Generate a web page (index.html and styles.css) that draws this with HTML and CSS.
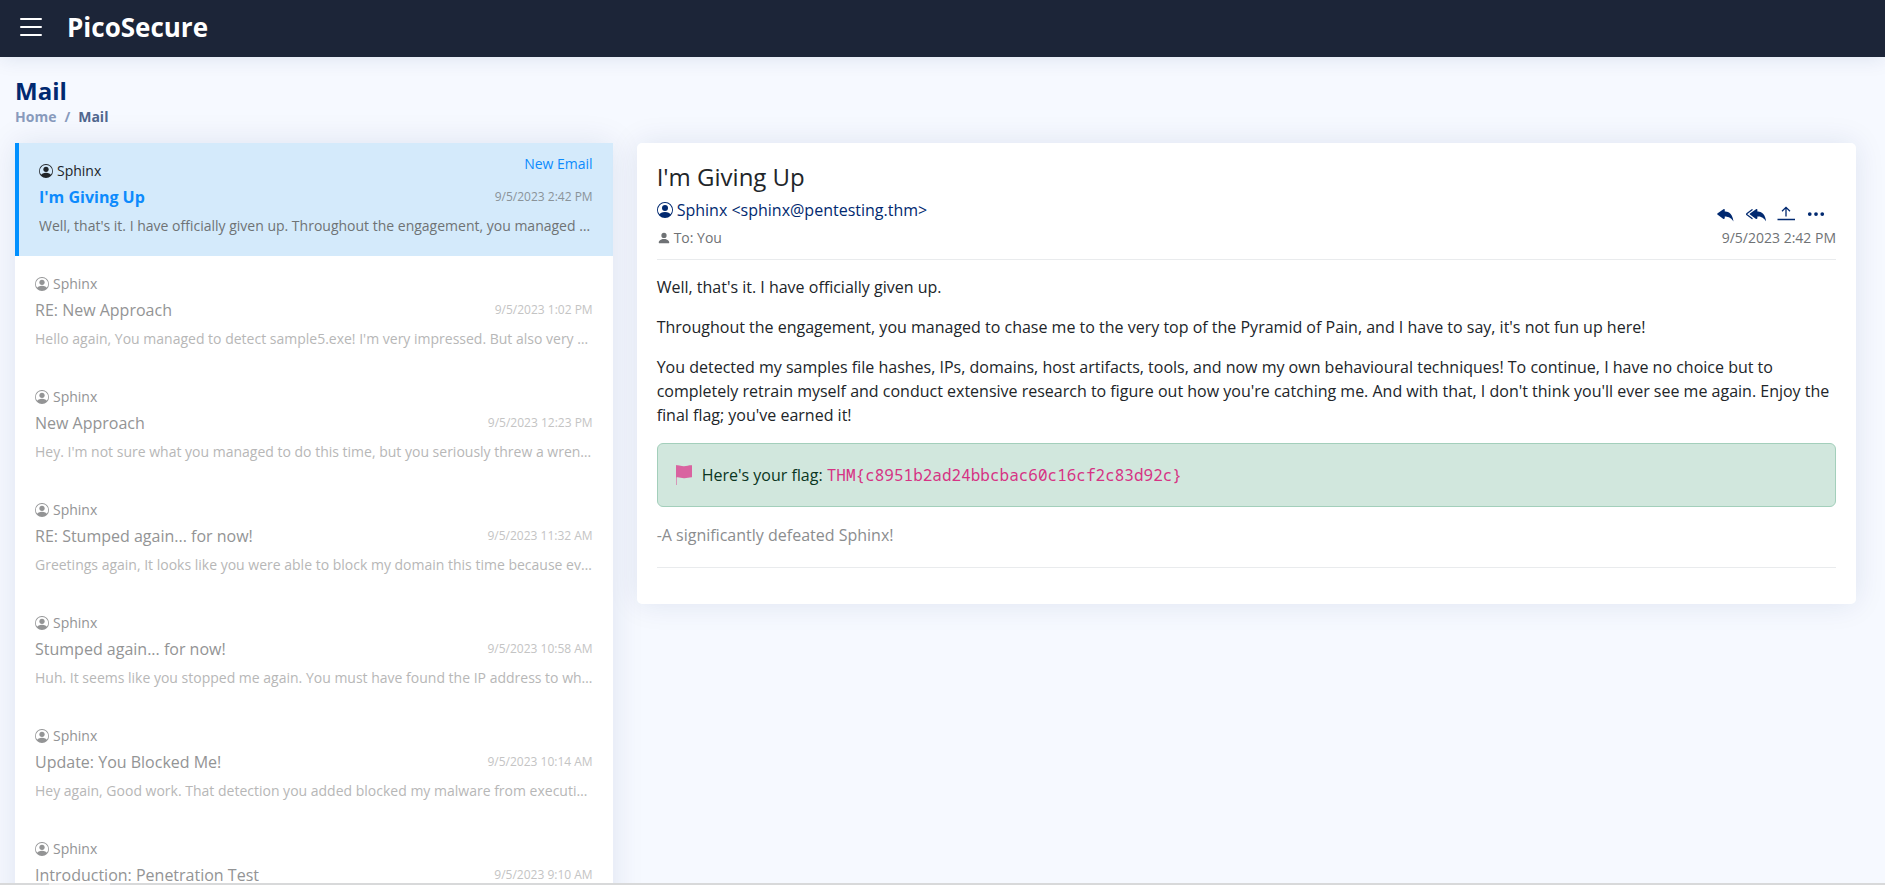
FILE: index.html
```html
<!DOCTYPE html>
<html lang="en">
<head>
<meta charset="utf-8">
<title>PicoSecure - Mail</title>
<link rel="stylesheet" href="styles.css">
</head>
<body>
<svg class="sprite" aria-hidden="true">
  <symbol id="person-circle" viewBox="0 0 16 16"><path d="M11 6a3 3 0 1 1-6 0 3 3 0 0 1 6 0z"/><path fill-rule="evenodd" d="M0 8a8 8 0 1 1 16 0A8 8 0 0 1 0 8zm8-7a7 7 0 0 0-5.468 11.37C3.242 11.226 4.805 10 8 10s4.757 1.225 5.468 2.37A7 7 0 0 0 8 1z"/></symbol>
</svg>

<header class="header">
  <button class="menu-toggle" type="button" aria-label="Toggle menu">
    <svg viewBox="0 0 16 16"><path fill-rule="evenodd" d="M2.5 12a.5.5 0 0 1 .5-.5h10a.5.5 0 0 1 0 1H3a.5.5 0 0 1-.5-.5zm0-4a.5.5 0 0 1 .5-.5h10a.5.5 0 0 1 0 1H3a.5.5 0 0 1-.5-.5zm0-4a.5.5 0 0 1 .5-.5h10a.5.5 0 0 1 0 1H3a.5.5 0 0 1-.5-.5z"/></svg>
  </button>
  <a class="brand" href="#">PicoSecure</a>
</header>

<main class="main">
  <div class="page-title">
    <h1>Mail</h1>
    <nav class="breadcrumb" aria-label="Breadcrumb">
      <a href="#">Home</a><span>/</span><span class="current">Mail</span>
    </nav>
  </div>

  <div class="columns">
    <section class="list-column" aria-label="Inbox">
      <ul class="mail-list">
        <li class="mail-item active">
          <div class="item-top"><span class="sender"><svg><use href="#person-circle"/></svg>Sphinx</span><span class="new-label">New Email</span></div>
          <div class="item-subject"><a href="#">I'm Giving Up</a><time>9/5/2023 2:42 PM</time></div>
          <p class="preview">Well, that's it. I have officially given up. Throughout the engagement, you managed to chase me to the very top</p>
        </li>
        <li class="mail-item">
          <div class="item-top"><span class="sender"><svg><use href="#person-circle"/></svg>Sphinx</span></div>
          <div class="item-subject"><a href="#">RE: New Approach</a><time>9/5/2023 1:02 PM</time></div>
          <p class="preview">Hello again, You managed to detect sample5.exe! I'm very impressed. But also very frustrated.</p>
        </li>
        <li class="mail-item">
          <div class="item-top"><span class="sender"><svg><use href="#person-circle"/></svg>Sphinx</span></div>
          <div class="item-subject"><a href="#">New Approach</a><time>9/5/2023 12:23 PM</time></div>
          <p class="preview">Hey. I'm not sure what you managed to do this time, but you seriously threw a wrench in my plans.</p>
        </li>
        <li class="mail-item">
          <div class="item-top"><span class="sender"><svg><use href="#person-circle"/></svg>Sphinx</span></div>
          <div class="item-subject"><a href="#">RE: Stumped again... for now!</a><time>9/5/2023 11:32 AM</time></div>
          <p class="preview">Greetings again, It looks like you were able to block my domain this time because every sample failed.</p>
        </li>
        <li class="mail-item">
          <div class="item-top"><span class="sender"><svg><use href="#person-circle"/></svg>Sphinx</span></div>
          <div class="item-subject"><a href="#">Stumped again... for now!</a><time>9/5/2023 10:58 AM</time></div>
          <p class="preview">Huh. It seems like you stopped me again. You must have found the IP address to which my sample connected.</p>
        </li>
        <li class="mail-item">
          <div class="item-top"><span class="sender"><svg><use href="#person-circle"/></svg>Sphinx</span></div>
          <div class="item-subject"><a href="#">Update: You Blocked Me!</a><time>9/5/2023 10:14 AM</time></div>
          <p class="preview">Hey again, Good work. That detection you added blocked my malware from executing on the machine.</p>
        </li>
        <li class="mail-item">
          <div class="item-top"><span class="sender"><svg><use href="#person-circle"/></svg>Sphinx</span></div>
          <div class="item-subject"><a href="#">Introduction: Penetration Test</a><time>9/5/2023 9:10 AM</time></div>
        </li>
      </ul>
    </section>

    <section class="message-column" aria-label="Message">
      <article class="message">
        <header class="message-header">
          <div class="message-meta">
            <h2>I'm Giving Up</h2>
            <div class="from"><svg><use href="#person-circle"/></svg>Sphinx &lt;sphinx@pentesting.thm&gt;</div>
            <div class="to"><svg viewBox="0 0 16 16"><path d="M3 14s-1 0-1-1 1-4 6-4 6 3 6 4-1 1-1 1H3zm5-6a3 3 0 1 0 0-6 3 3 0 0 0 0 6z"/></svg>To: You</div>
          </div>
          <div class="message-side">
            <div class="actions">
              <button type="button" aria-label="Reply"><svg viewBox="0 0 16 16"><path d="M5.921 11.9 1.353 8.62a.719.719 0 0 1 0-1.238L5.921 4.1A.716.716 0 0 1 7 4.719V6c1.5 0 6 0 7 8-2.5-4.5-7-4-7-4v1.281c0 .56-.606.898-1.079.62z"/></svg></button>
              <button type="button" aria-label="Reply all"><svg viewBox="0 0 16 16"><path d="M8.021 11.9 3.453 8.62a.719.719 0 0 1 0-1.238L8.021 4.1a.716.716 0 0 1 1.079.619V6c1.5 0 6 0 7 8-2.5-4.5-7-4-7-4v1.281c0 .56-.606.898-1.079.62z"/><path d="M5.232 4.293a.5.5 0 0 1-.106.7L1.114 7.945a.5.5 0 0 1-.042.028.147.147 0 0 0 0 .252.503.503 0 0 1 .042.028l4.012 2.954a.5.5 0 1 1-.593.805L.539 9.073a1.147 1.147 0 0 1 0-1.946l3.994-2.94a.5.5 0 0 1 .699.106z"/></svg></button>
              <button type="button" aria-label="Forward"><svg viewBox="0 0 20 20"><path d="M1.500 15.500h17.500M10 12.500V4M6 7.200 10 3.400 14 7.200" fill="none" stroke="currentColor" stroke-width="1.300"/></svg></button>
              <button type="button" aria-label="More"><svg viewBox="0 0 16 16"><path d="M3 9.500a1.500 1.500 0 1 1 0-3 1.500 1.500 0 0 1 0 3zm5 0a1.500 1.500 0 1 1 0-3 1.500 1.500 0 0 1 0 3zm5 0a1.500 1.500 0 1 1 0-3 1.500 1.500 0 0 1 0 3z"/></svg></button>
            </div>
            <time>9/5/2023 2:42 PM</time>
          </div>
        </header>
        <div class="message-body">
          <p>Well, that's it. I have officially given up.</p>
          <p>Throughout the engagement, you managed to chase me to the very top of the Pyramid of Pain, and I have to say, it's not fun up here!</p>
          <p>You detected my samples file hashes, IPs, domains, host artifacts, tools, and now my own behavioural techniques! To continue, I have no choice but to completely retrain myself and conduct extensive research to figure out how you're catching me. And with that, I don't think you'll ever see me again. Enjoy the final flag; you've earned it!</p>
          <div class="flag-alert">
            <svg viewBox="0 0 20 20"><path d="M2.500 0v20" fill="none" stroke="currentColor" opacity=".6"/><path d="M2 .500c3-1 5 .9 8 .7s4-.9 8-.9v12c-3-.1-5 1-8 .9s-5-1.500-8-.8z"/></svg>
            <span>Here's your flag: <code>THM{c8951b2ad24bbcbac60c16cf2c83d92c}</code></span>
          </div>
          <p class="signature">-A significantly defeated Sphinx!</p>
        </div>
      </article>
    </section>
  </div>
</main>
<div class="bottom-edge"></div>
</body>
</html>
```
FILE: styles.css
```css
* { box-sizing: border-box; }

body {
  margin: 0;
  height: 100vh;
  overflow: hidden;
  display: flex;
  flex-direction: column;
  background: #f6f9ff;
  color: #212529;
  font: 16px/24px "Open Sans", sans-serif;
}

.sprite { display: none; }
svg { fill: currentColor; flex: none; }
a { color: inherit; text-decoration: none; }
h1, h2, p, ul { margin: 0; padding: 0; }

button {
  border: 0;
  padding: 0;
  background: none;
  color: inherit;
  display: flex;
}

.header {
  flex: none;
  height: 57px;
  padding: 0 15px 3px;
  display: flex;
  align-items: center;
  gap: 20px;
  background: #1c2538;
  color: #fff;
  box-shadow: 0 2px 20px rgba(1, 41, 112, 0.1);
}

.menu-toggle svg { width: 32px; height: 32px; }
.brand { font-size: 26px; line-height: 31px; font-weight: 700; }

.main {
  flex: 1;
  min-height: 0;
  padding: 19px 29px 0 15px;
}

.page-title { margin-bottom: 16px; }

.page-title h1 {
  font-size: 24px;
  line-height: 30px;
  font-weight: 700;
  color: #012970;
}

.breadcrumb {
  display: flex;
  gap: 8px;
  font-size: 14px;
  line-height: 21px;
  font-weight: 700;
  color: #899bbd;
}

.breadcrumb .current { color: #51678f; }

.columns {
  display: flex;
  align-items: flex-start;
  margin: 0 -12px;
}

.list-column { width: 33.3333%; padding: 0 12px; }
.message-column { width: 66.6667%; padding: 0 12px; }

.mail-list {
  list-style: none;
  background: #fff;
  box-shadow: 0 0 30px rgba(1, 41, 112, 0.1);
}

.mail-item {
  height: 113px;
  padding: 16px 20px;
  font-size: 14px;
  line-height: 24px;
  color: #939495;
}

.item-top, .item-subject {
  display: flex;
  justify-content: space-between;
}

.sender { display: flex; align-items: center; gap: 4px; }
.sender svg { width: 14px; height: 14px; }
.item-subject { align-items: center; height: 28px; }
.item-subject a { font-size: 16px; }
.item-subject time { font-size: 12px; color: #c4c4c4; }

.preview {
  padding-top: 4px;
  line-height: 21px;
  color: #b7b7b7;
  white-space: nowrap;
  overflow: hidden;
  text-overflow: ellipsis;
}

.mail-item.active {
  border-left: 4px solid #0090ff;
  background: #d4eafb;
  color: #212529;
}

.active .item-subject a { font-weight: 700; color: #0d8bfd; }
.active .item-subject time { color: #8a9399; }
.active .preview { color: #6f7375; }
.new-label { color: #0d8bfd; line-height: 10px; }

.message {
  padding: 18px 20px 36px;
  border-radius: 5px;
  background: #fff;
  box-shadow: 0 0 30px rgba(1, 41, 112, 0.1);
}

.message-header {
  display: flex;
  justify-content: space-between;
  align-items: flex-end;
  padding-bottom: 11px;
  border-bottom: 1px solid #e9ebed;
}

.message-meta h2 { font-size: 24px; line-height: 31px; font-weight: 400; }

.from {
  display: flex;
  align-items: center;
  gap: 4px;
  height: 35px;
  color: #012970;
}

.from svg { width: 16px; height: 16px; }

.to, .message-side {
  font-size: 14px;
  line-height: 21px;
  color: #6f7275;
}

.to { display: flex; align-items: center; gap: 3px; }
.to svg { width: 14px; height: 14px; }

.message-side { text-align: right; }
.message-side time { display: block; }

.actions {
  display: flex;
  align-items: center;
  justify-content: flex-end;
  gap: 10px;
  padding-right: 10px;
  margin-bottom: 3px;
  color: #012970;
}

.actions svg { width: 20px; height: 20px; }

.message-body {
  padding: 15px 0 20px;
  border-bottom: 1px solid #e9ebed;
}

.message-body p { margin-bottom: 16px; }

.flag-alert {
  display: flex;
  align-items: center;
  gap: 8px;
  height: 64px;
  margin-bottom: 16px;
  padding: 0 16px;
  border: 1px solid #a3cfbb;
  border-radius: 6px;
  background: #d1e7dd;
  color: #0a3622;
}

.flag-alert svg { width: 20px; height: 20px; color: #d963a0; }

.flag-alert code {
  font-family: "Noto Sans Mono", "DejaVu Sans Mono", monospace;
  font-size: 16px;
  color: #d63384;
}

.message-body .signature { margin: 0; color: #8b8d8f; }

.bottom-edge {
  position: fixed;
  left: 0;
  right: 0;
  bottom: 0;
  height: 2px;
  background: linear-gradient(90deg, #d8d9da 49px, #f0f0f0 49px, #f0f0f0 110px, #d8d9da 110px);
}
```
